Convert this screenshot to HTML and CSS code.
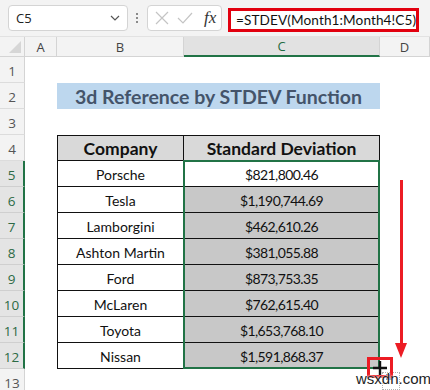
FILE: index.html
```html
<!DOCTYPE html>
<html>
<head>
<meta charset="utf-8">
<link rel="stylesheet" href="styles.css">
</head>
<body>
<div class="app">
  <div class="toolbar">
    <div class="namebox">
      <span>C5</span>
      <svg class="chev" width="10" height="6" viewBox="0 0 10 6"><path d="M1 1 L5 5 L9 1" fill="none" stroke="#555" stroke-width="1.2"/></svg>
    </div>
    <div class="dots"><i></i><i></i><i></i></div>
    <div class="fxbox">
      <svg width="14" height="14" viewBox="0 0 14 14"><path d="M1 1 L13 13 M13 1 L1 13" stroke="#c4c4c4" stroke-width="1.2" fill="none"/></svg>
      <svg width="16" height="14" viewBox="0 0 16 14"><path d="M1 7 L6 12 L15 2" stroke="#c4c4c4" stroke-width="1.2" fill="none"/></svg>
      <span class="fx">fx</span>
    </div>
    <div class="formula">=STDEV(Month1:Month4!C5)</div>
  </div>

  <div class="sheet">
    <div class="corner"><svg width="12" height="12" viewBox="0 0 12 12"><path d="M12 0 L12 12 L0 12 Z" fill="#d6d6d6"/></svg></div>
    <div class="ch">A</div><div class="ch">B</div><div class="ch chsel">C</div><div class="ch">D</div>

    <div class="rh">1</div><div></div><div></div><div></div><div></div>

    <div class="rh">2</div><div></div><div class="title">3d Reference by STDEV Function</div><div></div>

    <div class="rh">3</div><div></div><div></div><div></div><div></div>

    <div class="rh">4</div><div></div><div class="td th first">Company</div><div class="td th">Standard Deviation</div><div></div>

    <div class="rh rsel">5</div><div></div><div class="td first">Porsche</div><div class="td num sc top">$821,800.46</div><div></div>
    <div class="rh rsel">6</div><div></div><div class="td first">Tesla</div><div class="td num sc gray">$1,190,744.69</div><div></div>
    <div class="rh rsel">7</div><div></div><div class="td first">Lamborgini</div><div class="td num sc gray">$462,610.26</div><div></div>
    <div class="rh rsel">8</div><div></div><div class="td first">Ashton Martin</div><div class="td num sc gray">$381,055.88</div><div></div>
    <div class="rh rsel">9</div><div></div><div class="td first">Ford</div><div class="td num sc gray">$873,753.35</div><div></div>
    <div class="rh rsel">10</div><div></div><div class="td first">McLaren</div><div class="td num sc gray">$762,615.40</div><div></div>
    <div class="rh rsel">11</div><div></div><div class="td first">Toyota</div><div class="td num sc gray">$1,653,768.10</div><div></div>
    <div class="rh rsel">12</div><div></div><div class="td first">Nissan</div><div class="td num sc gray bottom">$1,591,868.37</div><div></div>

    <div class="rh">13</div><div></div><div></div><div></div><div></div>
  </div>

  <div class="arrow">
    <div class="shaft"></div>
    <div class="head"></div>
  </div>
  <div class="autofill"><i></i></div>
  <div class="handlebox">
    <svg width="16" height="16" viewBox="0 0 16 16"><path d="M8 1 V15 M1 8 H15" stroke="#111" stroke-width="2.4"/></svg>
  </div>
  <div class="watermark">wsxdn.com</div>
</div>
</body>
</html>
```

FILE: styles.css
```css
* { box-sizing: border-box; }
html, body { margin: 0; padding: 0; }
body {
  width: 430px;
  height: 390px;
  overflow: hidden;
  background: #ffffff;
  font-family: Lato, "Liberation Sans", sans-serif;
}
.app {
  position: relative;
  width: 430px;
  height: 390px;
  overflow: hidden;
}
.toolbar {
  height: 37px;
  background: #f3f3f3;
  display: flex;
  align-items: flex-start;
  padding: 5px 0 0 8px;
  border-bottom: 1px solid #e2e2e2;
}
.namebox {
  width: 120px;
  height: 26px;
  background: #fff;
  border: 1px solid #d4d4d4;
  border-radius: 4px;
  display: flex;
  align-items: center;
  justify-content: space-between;
  padding: 0 7px 0 7px;
  font-family: "Open Sans", "Liberation Sans", sans-serif;
  font-size: 13px;
  color: #222;
}
.dots {
  width: 4px;
  margin-left: 7px;
  height: 26px;
  display: flex;
  flex-direction: column;
  justify-content: center;
  align-items: center;
  gap: 2px;
}
.dots i {
  display: block;
  width: 2px;
  height: 2px;
  background: #8a8a8a;
}
.fxbox {
  width: 75px;
  height: 26px;
  margin-left: 8px;
  background: #fff;
  border: 1px solid #d4d4d4;
  border-radius: 4px;
  display: flex;
  align-items: center;
  padding-left: 7px;
  gap: 8px;
}
.fx {
  font-family: "Liberation Serif", serif;
  font-style: italic;
  font-size: 17px;
  color: #333;
  margin-left: 3px;
}
.formula {
  width: 191px;
  height: 24px;
  margin-left: 6px;
  margin-top: 3px;
  background: #fff;
  border: 3px solid #e2000f;
  font-family: Lato, "Liberation Sans", sans-serif;
  font-size: 13.6px;
  letter-spacing: 0.1px;
  line-height: 18px;
  color: #111;
  padding-left: 5px;
  white-space: nowrap;
}

.sheet {
  display: grid;
  grid-template-columns: 25px 32px 127px 196px 1fr;
  grid-template-rows: 20px;
  grid-auto-rows: 26px;
}
.corner {
  background: #f3f3f3;
  border-right: 1px solid #d4d4d4;
  border-bottom: 1px solid #d4d4d4;
  display: flex;
  align-items: flex-end;
  justify-content: flex-end;
  padding: 0 3px 3px 0;
}
.ch {
  background: #f3f3f3;
  border-right: 1px solid #d4d4d4;
  border-bottom: 1px solid #d4d4d4;
  font-family: "Open Sans", "Liberation Sans", sans-serif;
  font-size: 13px;
  color: #444;
  display: flex;
  align-items: center;
  justify-content: center;
}
.ch.chsel {
  background: #e2e2e2;
  color: #1f6b42;
  border-bottom: 2px solid #217346;
}
.rh {
  background: #f3f3f3;
  border-right: 1px solid #d4d4d4;
  border-bottom: 1px solid #dcdcdc;
  font-family: "Open Sans", "Liberation Sans", sans-serif;
  font-size: 13.5px;
  color: #555;
  display: flex;
  align-items: center;
  justify-content: center;
  padding-top: 3px;
}
.rh.rsel {
  background: #e4e4e4;
  color: #2c6a45;
  border-right: 2px solid #217346;
  border-bottom: 1px solid #cfcfcf;
}
.title {
  grid-column: span 2;
  background: #bdd7ee;
  color: #44546a;
  font-weight: bold;
  font-size: 19.5px;
  display: flex;
  align-items: center;
  justify-content: center;
}
.td {
  border-right: 1px solid #111;
  border-bottom: 1px solid #111;
  display: flex;
  align-items: center;
  justify-content: center;
  font-size: 14px;
  color: #111;
  padding-top: 1px;
}
.td.num { letter-spacing: -0.6px; }
.td.first { border-left: 1px solid #111; }
.td.th {
  border-top: 1px solid #111;
  background: #d9d9d9;
  font-weight: bold;
  font-size: 17.5px;
}
.td.gray { background: #c8c8c8; }

.sc { position: relative; }
.sc::after {
  content: "";
  position: absolute;
  left: -1px;
  right: -1px;
  top: -1px;
  bottom: -1px;
  border-left: 2px solid #217346;
  border-right: 2px solid #217346;
}
.sc.top::after { border-top: 2px solid #217346; }
.sc.bottom::after { border-bottom: 2px solid #217346; }

.arrow {
  position: absolute;
  left: 394px;
  top: 180px;
  width: 14px;
  height: 178px;
  display: flex;
  flex-direction: column;
  align-items: center;
}
.shaft {
  width: 3px;
  flex: 1;
  background: #ec1c24;
}
.head {
  width: 0;
  height: 0;
  border-left: 6px solid transparent;
  border-right: 6px solid transparent;
  border-top: 15px solid #ec1c24;
}
.handlebox {
  position: absolute;
  left: 367px;
  top: 357px;
  width: 26px;
  height: 21px;
  border: 3px solid #ec1c24;
  display: flex;
  align-items: center;
  justify-content: center;
}
.autofill {
  position: absolute;
  left: 382px;
  top: 372px;
  width: 18px;
  height: 18px;
  border: 1px dotted #b0b0b0;
  background: #fff;
}
.autofill i {
  display: block;
  width: 6px;
  height: 6px;
  margin: 1px 0 0 3px;
  background: #4a78c8;
}
.watermark {
  position: absolute;
  left: 356px;
  top: 370px;
  font-family: "Liberation Sans", Arial, sans-serif;
  font-size: 15px;
  color: #222;
  text-shadow: 0 0 2px #fff, 0 0 2px #fff;
}
```
